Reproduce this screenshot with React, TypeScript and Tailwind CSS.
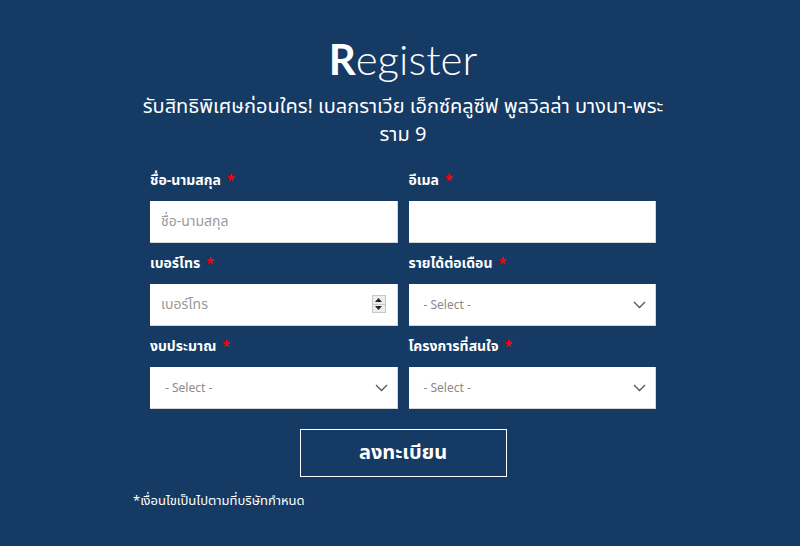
import React from "react";

const Label = ({ text }: { text: string }) => (
  <div className="h-[20px] flex items-center text-[14px] font-bold text-white leading-none">
    {text}
    <span className="text-[#ff0000] ml-[6px]">*</span>
  </div>
);

const Chevron = () => (
  <svg width="13" height="8" viewBox="0 0 13 8" className="absolute right-[9px] top-[17px]">
    <path d="M1 1 L6.5 6.5 L12 1" stroke="#555" strokeWidth="1.3" fill="none" />
  </svg>
);

const SelectBox = () => (
  <div className="relative h-[42px] bg-white border-b border-r border-[#d5d5d5] flex items-center pl-[15px] text-[12px] text-[#8a8a8a]">
    - Select -
    <Chevron />
  </div>
);

const Field = ({ label, children }: { label: string; children: React.ReactNode }) => (
  <div className="flex flex-col gap-[10px]">
    <Label text={label} />
    {children}
  </div>
);

export default function App() {
  return (
    <div
      className="w-full h-[546px] bg-[#153a64] flex justify-center pl-[6px] overflow-hidden"
      style={{ fontFamily: '"Noto Sans Thai", "Liberation Sans", "Noto Sans", sans-serif' }}
    >
      <div className="w-[540px] flex flex-col">
        <h1
          className="mt-[34px] text-center text-white text-[42px] leading-[50px] font-light"
          style={{ fontFamily: 'Lato, "Liberation Sans", sans-serif' }}
        >
          <span className="font-bold">R</span>egister
        </h1>
        <p className="mt-[9px] text-center text-white text-[20px] leading-[28px] whitespace-nowrap">
          รับสิทธิพิเศษก่อนใคร! เบลกราเวีย เอ็กซ์คลูซีฟ พูลวิลล่า บางนา-พระ
          <br />
          ราม 9
        </p>
        <div className="mt-[22px] px-[17px] grid grid-cols-2 gap-x-[11px] gap-y-[11px]">
          <Field label="ชื่อ-นามสกุล">
            <div className="h-[42px] bg-white border-b border-r border-[#d5d5d5] flex items-center pl-[11px] text-[14px] text-[#9a9a9a]">
              ชื่อ-นามสกุล
            </div>
          </Field>
          <Field label="อีเมล">
            <div className="h-[42px] bg-white border-b border-r border-[#d5d5d5]" />
          </Field>
          <Field label="เบอร์โทร">
            <div className="relative h-[42px] bg-white border-b border-r border-[#d5d5d5] flex items-center pl-[11px] text-[14px] text-[#9a9a9a]">
              เบอร์โทร
              <div className="absolute right-[11px] top-[11px] w-[14px] h-[18px] border border-[#c8c8c8] bg-[#ececec] flex flex-col">
                <div className="flex-1 flex items-center justify-center border-b border-[#c8c8c8]">
                  <svg width="7" height="4" viewBox="0 0 7 4"><path d="M0 4 L3.5 0 L7 4 Z" fill="#222" /></svg>
                </div>
                <div className="flex-1 flex items-center justify-center">
                  <svg width="7" height="4" viewBox="0 0 7 4"><path d="M0 0 L3.5 4 L7 0 Z" fill="#222" /></svg>
                </div>
              </div>
            </div>
          </Field>
          <Field label="รายได้ต่อเดือน">
            <SelectBox />
          </Field>
          <Field label="งบประมาณ">
            <SelectBox />
          </Field>
          <Field label="โครงการที่สนใจ">
            <SelectBox />
          </Field>
        </div>
        <div className="flex justify-center mt-[20px]">
          <button className="w-[207px] h-[48px] border border-white text-white text-[20px] font-bold bg-transparent">
            ลงทะเบียน
          </button>
        </div>
        <p className="mt-[14px] text-white text-[13px] leading-[20px]">*เงื่อนไขเป็นไปตามที่บริษัทกำหนด</p>
      </div>
    </div>
  );
}
